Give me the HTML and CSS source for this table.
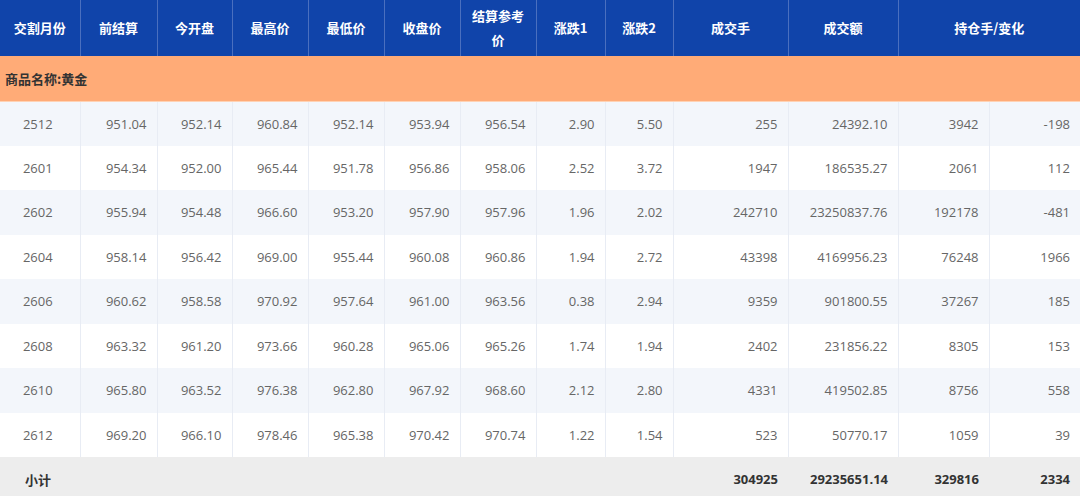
FILE: index.html
```html
<!DOCTYPE html>
<html lang="zh-CN">
<head>
<meta charset="utf-8">
<title>交割月份行情</title>
<link rel="stylesheet" href="styles.css">
</head>
<body>
<table class="quote">
  <colgroup>
    <col class="c80"><col class="c77"><col class="c75"><col class="c76"><col class="c76"><col class="c76"><col class="c76"><col class="c69"><col class="c68"><col class="c115"><col class="c110"><col class="c91"><col class="c91">
  </colgroup>
  <thead>
    <tr>
      <th>交割月份</th><th>前结算</th><th>今开盘</th><th>最高价</th><th>最低价</th><th>收盘价</th><th>结算参考价</th><th>涨跌1</th><th>涨跌2</th><th>成交手</th><th>成交额</th><th colspan="2">持仓手/变化</th>
    </tr>
  </thead>
  <tbody>
    <tr class="group"><td colspan="13">商品名称:黄金</td></tr>
    <tr class="alt"><td class="m">2512</td><td>951.04</td><td>952.14</td><td>960.84</td><td>952.14</td><td>953.94</td><td>956.54</td><td>2.90</td><td>5.50</td><td>255</td><td>24392.10</td><td>3942</td><td>-198</td></tr>
    <tr><td class="m">2601</td><td>954.34</td><td>952.00</td><td>965.44</td><td>951.78</td><td>956.86</td><td>958.06</td><td>2.52</td><td>3.72</td><td>1947</td><td>186535.27</td><td>2061</td><td>112</td></tr>
    <tr class="alt"><td class="m">2602</td><td>955.94</td><td>954.48</td><td>966.60</td><td>953.20</td><td>957.90</td><td>957.96</td><td>1.96</td><td>2.02</td><td>242710</td><td>23250837.76</td><td>192178</td><td>-481</td></tr>
    <tr><td class="m">2604</td><td>958.14</td><td>956.42</td><td>969.00</td><td>955.44</td><td>960.08</td><td>960.86</td><td>1.94</td><td>2.72</td><td>43398</td><td>4169956.23</td><td>76248</td><td>1966</td></tr>
    <tr class="alt"><td class="m">2606</td><td>960.62</td><td>958.58</td><td>970.92</td><td>957.64</td><td>961.00</td><td>963.56</td><td>0.38</td><td>2.94</td><td>9359</td><td>901800.55</td><td>37267</td><td>185</td></tr>
    <tr><td class="m">2608</td><td>963.32</td><td>961.20</td><td>973.66</td><td>960.28</td><td>965.06</td><td>965.26</td><td>1.74</td><td>1.94</td><td>2402</td><td>231856.22</td><td>8305</td><td>153</td></tr>
    <tr class="alt"><td class="m">2610</td><td>965.80</td><td>963.52</td><td>976.38</td><td>962.80</td><td>967.92</td><td>968.60</td><td>2.12</td><td>2.80</td><td>4331</td><td>419502.85</td><td>8756</td><td>558</td></tr>
    <tr><td class="m">2612</td><td>969.20</td><td>966.10</td><td>978.46</td><td>965.38</td><td>970.42</td><td>970.74</td><td>1.22</td><td>1.54</td><td>523</td><td>50770.17</td><td>1059</td><td>39</td></tr>
    <tr class="total"><td class="m">小计</td><td></td><td></td><td></td><td></td><td></td><td></td><td></td><td></td><td>304925</td><td>29235651.14</td><td>329816</td><td>2334</td></tr>
  </tbody>
</table>
</body>
</html>
```
FILE: styles.css
```css
html, body {
  margin: 0;
  padding: 0;
  background: #ffffff;
}
body {
  font-family: "Open Sans", "Noto Sans CJK SC", sans-serif;
  font-size: 13px;
  color: #666666;
  overflow: hidden;
}
.quote {
  border-collapse: collapse;
  table-layout: fixed;
  width: 1080px;
}
.c80 { width: 80px; }
.c77 { width: 77px; }
.c75 { width: 75px; }
.c76 { width: 76px; }
.c69 { width: 69px; }
.c68 { width: 68px; }
.c115 { width: 115px; }
.c110 { width: 110px; }
.c91 { width: 91px; }

.quote th {
  background: #1044aa;
  color: #ffffff;
  font-family: "Noto Sans CJK SC", sans-serif;
  font-weight: 700;
  font-size: 13px;
  line-height: 24px;
  height: 56px;
  padding: 0 8px;
  text-align: center;
  vertical-align: middle;
  border-left: 1px solid #4a6fbf;
  box-sizing: border-box;
}
.quote th:first-child { border-left: none; }

.quote td {
  height: 44.5px;
  padding: 0 10px 0 4px;
  text-align: right;
  vertical-align: middle;
  border-left: 1px solid #e8ecf4;
  box-sizing: border-box;
  white-space: nowrap;
}
.quote td:first-child { border-left: none; }
.quote td.m {
  text-align: center;
  padding: 0 4px 0 0;
}
.quote tr.alt td { background: #f3f6fb; }

.quote tr.group td {
  background: #ffab77;
  color: #333333;
  font-family: "Noto Sans CJK SC", sans-serif;
  font-weight: 700;
  text-align: left;
  padding: 0 5px;
  height: 45px;
  border-bottom: 1px solid #ffd2b4;
}

.quote tr.total td {
  background: #ededed;
  color: #333333;
  font-weight: 700;
  border-left: none;
  font-family: "Open Sans", "Noto Sans CJK SC", sans-serif;
}
.quote tr.total td.m {
  font-family: "Noto Sans CJK SC", sans-serif;
}
```
